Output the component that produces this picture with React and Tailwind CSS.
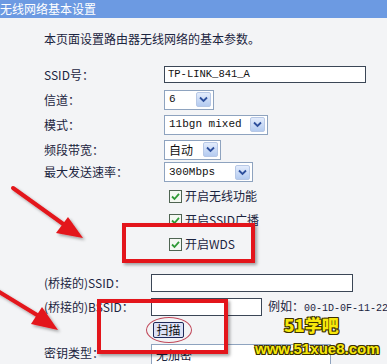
import React from "react";

const cn = '"Noto Sans CJK SC", "Liberation Sans", sans-serif';

function Chevron() {
  return (
    <div className="w-[15px] h-[15px] rounded-[2px] border border-[#b7c8e6] bg-gradient-to-b from-[#e3ecfc] to-[#b4cbf0] flex items-center justify-center">
      <svg width="9" height="7" viewBox="0 0 9 7">
        <path d="M1 1.5 L4.5 5 L8 1.5" fill="none" stroke="#2d4f9c" strokeWidth="1.8" />
      </svg>
    </div>
  );
}

function Select({ value, w, mono = true }) {
  return (
    <div
      className={`${w} shrink-0 h-[20px] border border-[#8ea3bf] bg-white flex items-center justify-between pl-[4px] pr-[2px]`}
    >
      <span
        className={mono ? "text-[11px] text-[#111]" : "text-[12px] text-[#111]"}
        style={{ fontFamily: mono ? '"Liberation Mono", monospace' : cn }}
      >
        {value}
      </span>
      <Chevron />
    </div>
  );
}

function Check({ label }) {
  return (
    <div className="h-[24px] flex items-center pl-[125px]">
      <svg width="13" height="13" viewBox="0 0 13 13" className="shrink-0">
        <rect x="0.5" y="0.5" width="12" height="12" fill="#f4f8f2" stroke="#4f6452" />
        <path d="M3 6.5 L5.5 9 L10 3.8" fill="none" stroke="#2f9a35" strokeWidth="1.8" />
      </svg>
      <span className="ml-[3px] text-[12px] text-[#1b2440]">{label}</span>
    </div>
  );
}

export default function App() {
  return (
    <div
      className="relative w-[387px] h-[364px] overflow-hidden bg-[#f3f4f6]"
      style={{ fontFamily: cn }}
    >
      <div className="h-[18px] bg-[#6c9ae2] text-white text-[12px] leading-[17px] whitespace-nowrap">
        无线网络基本设置
      </div>

      <div className="mt-[13px] pl-[44px] h-[16px] leading-[16px] text-[12px] text-[#1b2440]">
        本页面设置路由器无线网络的基本参数。
      </div>

      <div className="mt-[15px] pl-[44px] text-[12px] text-[#1b2440]">
        <div className="h-[25px] flex items-center">
          <div className="w-[120px] shrink-0">SSID号：</div>
          <div className="w-[202px] shrink-0 h-[17px] border border-[#3b4656] bg-white flex items-center pl-[3px]">
            <span className="text-[10.5px] text-[#111]" style={{ fontFamily: '"Liberation Mono", monospace' }}>
              TP-LINK_841_A
            </span>
          </div>
        </div>
        <div className="h-[25px] flex items-center">
          <div className="w-[120px] shrink-0">信道：</div>
          <Select value="6" w="w-[50px]" />
        </div>
        <div className="h-[25px] flex items-center">
          <div className="w-[120px] shrink-0">模式：</div>
          <Select value="11bgn mixed" w="w-[104px]" />
        </div>
        <div className="h-[25px] flex items-center">
          <div className="w-[120px] shrink-0">频段带宽：</div>
          <Select value="自动" w="w-[57px]" mono={false} />
        </div>
        <div className="h-[22px] flex items-start">
          <div className="w-[120px] shrink-0 leading-[20px]">最大发送速率：</div>
          <Select value="300Mbps" w="w-[89px]" />
        </div>

        <Check label="开启无线功能" />
        <Check label="开启SSID广播" />
        <Check label="开启WDS" />

        <div className="mt-[14px] h-[25px] flex items-center">
          <div className="w-[107px] shrink-0">(桥接的)SSID：</div>
          <div className="w-[202px] shrink-0 h-[18px] border border-[#3b4656] bg-white" />
        </div>
        <div className="h-[23px] flex items-center">
          <div className="w-[107px] shrink-0 whitespace-nowrap">(桥接的)BSSID：</div>
          <div className="w-[111px] shrink-0 h-[18px] border border-[#3b4656] bg-white" />
          <div className="ml-[6px] whitespace-nowrap">
            例如：
            <span className="text-[10px]" style={{ fontFamily: '"Liberation Mono", monospace' }}>
              00-1D-0F-11-22
            </span>
          </div>
        </div>
        <div className="h-[23px] flex items-center pl-[109px]">
          <div className="relative">
            <div className="w-[31px] h-[16px] border border-[#1e2a5a] bg-[#dde2f6] rounded-[2px] flex items-center justify-center text-[12px] text-[#111] leading-none">
              扫描
            </div>
            <div className="absolute -left-[7px] -top-[5px] w-[46px] h-[26px] rounded-[50%] border border-[#c0485a]" />
          </div>
        </div>
        <div className="h-[23px] flex items-center">
          <div className="w-[107px] shrink-0">密钥类型：</div>
          <div className="w-[180px] shrink-0 h-[21px] mt-[4px] border border-[#8ea3bf] bg-white pl-[4px] leading-[19px]">
            无加密
          </div>
        </div>
      </div>

      {/* annotations */}
      <div className="absolute left-[122px] top-[223px] w-[133px] h-[40px] border-[4px] border-[#e3151b] shadow-[2px_2px_3px_rgba(0,0,0,0.35)]" />
      <div className="absolute left-[97px] top-[299px] w-[131px] h-[55px] border-[4px] border-[#e3151b] shadow-[2px_2px_3px_rgba(0,0,0,0.35)]" />

      <svg className="absolute left-0 top-0" width="387" height="364" viewBox="0 0 387 364">
        <defs>
          <filter id="sh" x="-20%" y="-20%" width="140%" height="140%">
            <feDropShadow dx="2" dy="2" stdDeviation="1.5" floodColor="#000" floodOpacity="0.35" />
          </filter>
        </defs>
        <g filter="url(#sh)" fill="#e3151b" stroke="#e3151b">
          <line x1="13" y1="188" x2="66" y2="226" strokeWidth="4" strokeLinecap="round" />
          <polygon points="83,238 56,233 68,217" stroke="none" />
          <line x1="-4" y1="290" x2="42" y2="318" strokeWidth="4" strokeLinecap="round" />
          <polygon points="58,330 31,324 42,307" stroke="none" />
        </g>
      </svg>

      <div
        className="absolute left-[284px] top-[316px] text-[17px] font-black text-[#f7e80c] leading-none [text-shadow:-1px_-1px_0_#3d3200,1px_-1px_0_#3d3200,-1px_1px_0_#3d3200,1px_1px_0_#3d3200,0_1px_0_#3d3200,1px_0_0_#3d3200]"
        style={{ fontFamily: cn }}
      >
        51学吧
      </div>
      <div
        className="absolute left-[255px] top-[341px] text-[15px] font-bold text-[#f7e80c] leading-none [text-shadow:-1px_-1px_0_#3d3200,1px_-1px_0_#3d3200,-1px_1px_0_#3d3200,1px_1px_0_#3d3200,0_1px_0_#3d3200,1px_0_0_#3d3200]"
        style={{ fontFamily: '"Liberation Sans", sans-serif' }}
      >
        www.51xue8.com
      </div>
    </div>
  );
}
